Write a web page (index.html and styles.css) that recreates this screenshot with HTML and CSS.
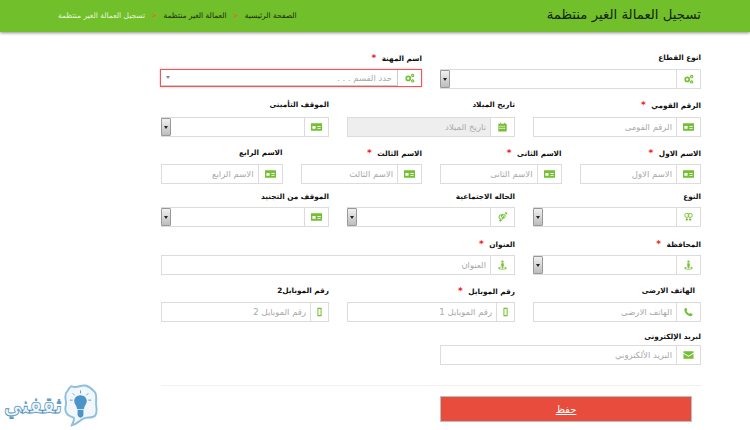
FILE: index.html
```html
<!DOCTYPE html>
<html lang="ar" dir="rtl">
<head>
<meta charset="utf-8">
<title>تسجيل العمالة الغير منتظمة</title>
<link rel="stylesheet" href="styles.css">
</head>
<body>
<svg class="defs" aria-hidden="true">
  <symbol id="i-cogs" viewBox="0 0 12 12"><g fill="none" stroke="currentColor"><circle cx="4.500" cy="6.500" r="2.400" stroke-width="2"/><circle cx="9.800" cy="3" r="1.300" stroke-width="1.400"/><circle cx="9.800" cy="9.500" r="1.300" stroke-width="1.400"/></g></symbol>
  <symbol id="i-card" viewBox="0 0 12 10"><path fill="currentColor" fill-rule="evenodd" d="M0 1h12v8H0zM1.500 4v3h3.500V4zM7 4v1h3.500V4zM7 6v1h3.500V6z"/></symbol>
  <symbol id="i-cal" viewBox="0 0 12 12"><path fill="currentColor" fill-rule="evenodd" d="M1 2h2V.8h1V2h4V.8h1V2h2v9.500H1zM2.200 4.500v1.300h1.500V4.500zM4.700 4.500v1.300h1.500V4.500zM7.200 4.500v1.300h1.500V4.500zM2.200 7v1.300h1.500V7zM4.700 7v1.300h1.500V7zM7.200 7v1.300h1.500V7z"/></symbol>
  <symbol id="i-venus" viewBox="0 0 12 12"><g fill="none" stroke="currentColor" stroke-width="1.100"><circle cx="4" cy="4" r="2.500"/><circle cx="8" cy="4" r="2.500"/><path d="M4 6.500V11M2.500 9h3M8 6.500V11M6.500 9h3"/></g></symbol>
  <symbol id="i-mars" viewBox="0 0 12 12"><g fill="none" stroke="currentColor" stroke-width="1.200"><circle cx="4.500" cy="6" r="2.700"/><circle cx="7" cy="5" r="2.300"/><path d="M9 3l2-2M9 1h2v2M3.500 8.500V11.500M2 10.300h3"/></g></symbol>
  <symbol id="i-person" viewBox="0 0 12 12"><path fill="currentColor" d="M6 .5a1.400 1.400 0 1 1 0 2.800 1.400 1.400 0 0 1 0-2.800zM4.500 3.800h3V7.500H7V10H5V7.500h-.5zM1 9.800c0-.9 1.200-1.500 2.800-1.700v1c-.8.100-1.300.4-1.300.7 0 .5 1.500.7 3.500.7s3.500-.2 3.500-.7c0-.3-.5-.6-1.300-.7v-1c1.600.2 2.800.8 2.800 1.700 0 1.200-2.200 1.700-5 1.700s-5-.5-5-1.700z"/></symbol>
  <symbol id="i-mobile" viewBox="0 0 12 12"><path fill="currentColor" fill-rule="evenodd" d="M3.500 1h5v10h-5zM4.700 2.500v7h2.600v-7z"/></symbol>
  <symbol id="i-phone" viewBox="0 0 12 12"><path fill="currentColor" d="M3 1l1.700 2.600-1 1.200c.5 1.300 1.700 2.600 3.400 3.400l1.200-1L11 8.800c-.3 1.300-1.200 2.200-2.200 2.200C5 11 1 6.500 1 3.200 1 2.200 1.900 1.300 3 1z"/></symbol>
  <symbol id="i-mail" viewBox="0 0 12 10"><path fill="currentColor" d="M.5 1h11v1.500L6 5.700.5 2.500zM.5 3.700 6 7l5.500-3.300V9H.5z"/></symbol>
</svg>

<header class="topbar">
  <h1 class="title">تسجيل العمالة الغير منتظمة</h1>
  <nav class="crumbs">
    <span>الصفحة الرئيسية</span><span class="sep">&lt;</span><span>العمالة الغير منتظمة</span><span class="sep">&lt;</span><span class="cur">تسجيل العمالة الغير منتظمة</span>
  </nav>
</header>

<main class="form">
  <div class="row r1">
    <div class="field s6"><label>انوع القطاع</label>
      <div class="group"><span class="addon"><svg class="ic"><use href="#i-cogs"/></svg></span><div class="sel"><span class="arrow"></span></div></div></div>
    <div class="field s6"><label>اسم المهنة <b>*</b></label>
      <div class="group alert"><span class="addon"><svg class="ic"><use href="#i-cogs"/></svg></span><div class="combo"><span class="ph">حدد القسم . . .</span><span class="caret"></span></div></div></div>
  </div>
  <div class="row r2">
    <div class="field s4"><label>الرقم القومي <b>*</b></label>
      <div class="group"><span class="addon"><svg class="ic"><use href="#i-card"/></svg></span><input placeholder="الرقم القومى"></div></div>
    <div class="field s4"><label>تاريخ الميلاد</label>
      <div class="group"><span class="addon"><svg class="ic"><use href="#i-cal"/></svg></span><input class="off" placeholder="تاريخ الميلاد" disabled></div></div>
    <div class="field s4"><label>الموقف التأمينى</label>
      <div class="group"><span class="addon"><svg class="ic"><use href="#i-card"/></svg></span><div class="sel"><span class="arrow"></span></div></div></div>
  </div>
  <div class="row r3">
    <div class="field s3"><label>الاسم الاول <b>*</b></label>
      <div class="group"><span class="addon"><svg class="ic"><use href="#i-card"/></svg></span><input placeholder="الاسم الاول"></div></div>
    <div class="field s3"><label>الاسم الثانى <b>*</b></label>
      <div class="group"><span class="addon"><svg class="ic"><use href="#i-card"/></svg></span><input placeholder="الاسم الثانى"></div></div>
    <div class="field s3"><label>الاسم الثالث <b>*</b></label>
      <div class="group"><span class="addon"><svg class="ic"><use href="#i-card"/></svg></span><input placeholder="الاسم الثالث"></div></div>
    <div class="field s3"><label>الاسم الرابع</label>
      <div class="group"><span class="addon"><svg class="ic"><use href="#i-card"/></svg></span><input placeholder="الاسم الرابع"></div></div>
  </div>
  <div class="row r4">
    <div class="field s4"><label>النوع</label>
      <div class="group"><span class="addon"><svg class="ic"><use href="#i-venus"/></svg></span><div class="sel"><span class="arrow"></span></div></div></div>
    <div class="field s4"><label>الحاله الاجتماعية</label>
      <div class="group"><span class="addon"><svg class="ic"><use href="#i-mars"/></svg></span><div class="sel"><span class="arrow"></span></div></div></div>
    <div class="field s4"><label>الموقف من التجنيد</label>
      <div class="group"><span class="addon"><svg class="ic"><use href="#i-card"/></svg></span><div class="sel"><span class="arrow"></span></div></div></div>
  </div>
  <div class="row r5">
    <div class="field s4"><label>المحافظة <b>*</b></label>
      <div class="group"><span class="addon"><svg class="ic"><use href="#i-person"/></svg></span><div class="sel"><span class="arrow"></span></div></div></div>
    <div class="field s8"><label>العنوان <b>*</b></label>
      <div class="group"><span class="addon"><svg class="ic"><use href="#i-person"/></svg></span><input placeholder="العنوان"></div></div>
  </div>
  <div class="row r6">
    <div class="field s4"><label class="inset">الهاتف الارضى</label>
      <div class="group"><span class="addon"><svg class="ic"><use href="#i-phone"/></svg></span><input placeholder="الهاتف الارضى"></div></div>
    <div class="field s4"><label>رقم الموبايل <b>*</b></label>
      <div class="group"><span class="addon narrow"><svg class="ic"><use href="#i-mobile"/></svg></span><input placeholder="رقم الموبايل 1"></div></div>
    <div class="field s4"><label>رقم الموبايل2</label>
      <div class="group"><span class="addon narrow"><svg class="ic"><use href="#i-mobile"/></svg></span><input placeholder="رقم الموبايل 2"></div></div>
  </div>
  <div class="row r7">
    <div class="field s6"><label>لبريد الإلكترونى</label>
      <div class="group"><span class="addon"><svg class="ic"><use href="#i-mail"/></svg></span><input placeholder="البريد الألكتروني"></div></div>
  </div>
  <hr class="rule">
  <div class="row">
    <div class="s6"><button class="save" type="button">حفظ</button></div>
  </div>
</main>

<div class="logo">
  <span class="brand">ثقفني</span>
  <svg class="blob" viewBox="0 0 36 44">
    <path fill="#f2f7fb" stroke="#8fbfdc" stroke-width="2" d="M10 3c5 2 8-2 13-1 5 1 7 4 10 7 2 3 1 7 1 11 0 5 2 9-1 13-3 3-8 1-12 3-4 2-7 6-12 7 1-3 3-5 2-8-3-1-7-2-8-6-2-4 1-7 0-11-1-4-1-8 2-11 1-2 3-5 5-4z"/>
    <path fill="none" stroke="#5aa0cf" d="M18 7v3M10 10l2 2M26 10l-2 2M7 17h3M29 17h-3"/>
    <path fill="#4a94c8" d="M18 12c4 0 6.500 3 6.500 6 0 3-2.500 4.500-3 8h-7c-.5-3.500-3-5-3-8 0-3 2.500-6 6.500-6z"/>
    <path fill="#4a94c8" d="M15 27h6v5c0 1-1 3-3 3s-3-2-3-3z"/>
  </svg>
</div>
</body>
</html>
```
FILE: styles.css
```css
* { box-sizing: border-box; }
html, body { margin: 0; padding: 0; }
body {
  width: 750px;
  height: 430px;
  overflow: hidden;
  position: relative;
  background: #fff;
  font-family: "DejaVu Sans", "Noto Sans", sans-serif;
  color: #222;
}
.defs { width: 0; height: 0; position: absolute; }

.topbar {
  height: 32px;
  background: #70bf2b;
  box-shadow: 0 1px 3px rgba(0, 0, 0, .45);
  display: flex;
  justify-content: space-between;
  align-items: center;
  padding: 0 49px 0 58px;
}
.title {
  margin: 0 0 3px;
  font-size: 13.300px;
  font-weight: 400;
  color: #16240c;
  line-height: 20px;
}
.crumbs {
  display: flex;
  gap: 5px;
  font-size: 7.500px;
  color: #1c2c0a;
  margin-top: -1px;
}
.crumbs .sep { color: #e2682c; padding: 0 1px; }
.crumbs .cur { color: #e9f5d8; }

.form { margin: 0 49px 0 0; width: 540px; position: absolute; top: 0; right: 0; }
.row {
  display: grid;
  grid-template-columns: repeat(12, 1fr);
  column-gap: 18px;
}
.r1 { margin-top: 52px; }
.r2 { margin-top: 10px; }
.r2 .group { margin-top: 6px; }
.r3 { margin-top: 10px; }
.r4 { margin-top: 7px; }
.r4 .group { margin-top: 4px; }
.r5 { margin-top: 11px; }
.r6 { margin-top: 10px; }
.r7 { margin-top: 9px; }
.s3 { grid-column: span 3; }
.s4 { grid-column: span 4; }
.s6 { grid-column: span 6; }
.s8 { grid-column: span 8; }

.field label {
  display: block;
  height: 12px;
  line-height: 12px;
  font-size: 7.300px;
  font-weight: 700;
  color: #111;
  text-align: right;
}
.field label b { color: #f01818; font-size: 9px; padding-right: 3px; }
.field label.inset { padding-right: 6px; }

.group {
  display: flex;
  height: 20px;
  margin-top: 5px;
  border: 1px solid #dcdcdc;
  background: #fff;
}
.r7 .group { margin-top: 2px; }
.addon {
  flex: none;
  width: 24px;
  display: flex;
  align-items: center;
  justify-content: center;
  border-left: 1px solid #dcdcdc;
  color: #74bf33;
}
.addon.narrow { width: 18px; }
.ic { width: 11px; height: 10px; }
.group input {
  flex: 1;
  min-width: 0;
  border: 0;
  padding: 0 4px;
  background: #fff;
  font: 8.500px "DejaVu Sans", sans-serif;
  color: #999;
  text-align: right;
  direction: rtl;
  outline: 0;
}
.group input::placeholder { color: #a8a8a8; opacity: 1; }
.group input.off { background: #eee; }
.group input.off::placeholder { color: #aaa; }

.sel { flex: 1; position: relative; display: flex; justify-content: flex-end; }
.arrow {
  width: 10px;
  height: 100%;
  margin: 0 0 0 -1px;
  background: linear-gradient(#f0f0f0, #bdbdbd);
  border: 1px solid #999;
  border-radius: 1px;
  display: flex;
  align-items: center;
  justify-content: center;
}
.arrow::after {
  content: "";
  border: 2.500px solid transparent;
  border-top: 3px solid #222;
  border-bottom: 0;
}

.alert {
  height: 18px;
  margin-left: -1px;
  border: 1px solid #ea5a5a;
  box-shadow: 0 0 2px rgba(234, 90, 90, .5);
}
.alert .addon { width: 24px; border-left: 1px solid #ccc; }
.combo {
  flex: 1;
  display: flex;
  justify-content: space-between;
  align-items: center;
  padding: 0 5px;
  border-bottom: 1px solid #ccc;
  font-size: 8.500px;
  color: #aaa;
}
.caret { border: 2.500px solid transparent; border-top: 3px solid #888; border-bottom: 0; }

.rule { margin: 20px 0 10px; border: 0; border-top: 1px solid #f0f0f0; }
.save {
  display: block;
  width: 252px;
  height: 26px;
  margin-right: auto;
  border: 1px solid #bdbdbd;
  background: #e74c3c;
  color: #fff;
  font: 10px "DejaVu Sans", sans-serif;
  text-decoration: underline;
  padding: 0;
}

.logo {
  position: absolute;
  left: 3px;
  top: 383px;
  display: flex;
  align-items: center;
  direction: ltr;
}
.blob { width: 35px; height: 44px; flex: none; }
.brand {
  width: 60px;
  font-size: 18px;
  font-weight: 700;
  line-height: 44px;
  text-align: center;
  color: #eef6fb;
  -webkit-text-stroke: .7px #4f92c0;
  direction: rtl;
  transform: scaleY(1.25);
}
```
